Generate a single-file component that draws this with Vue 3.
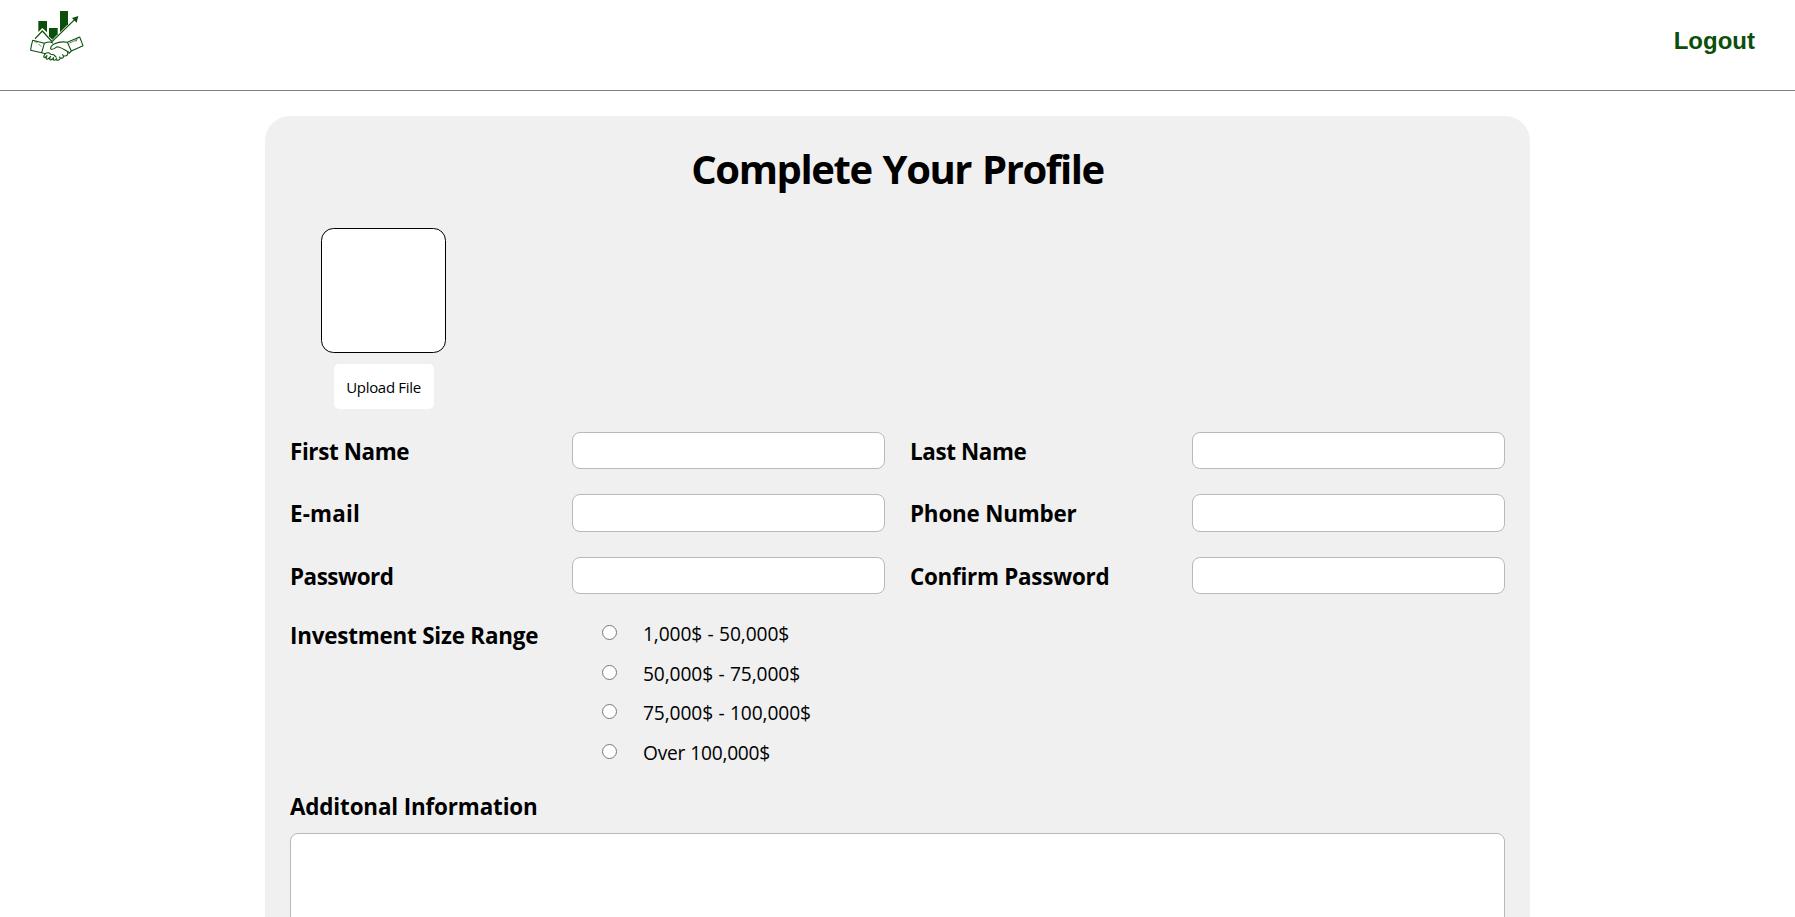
<script setup>
const fields = [
  { id: 'first', label: 'First Name', type: 'text' },
  { id: 'last', label: 'Last Name', type: 'text' },
  { id: 'email', label: 'E-mail', type: 'email' },
  { id: 'phone', label: 'Phone Number', type: 'tel' },
  { id: 'password', label: 'Password', type: 'password' },
  { id: 'confirm', label: 'Confirm Password', type: 'password' },
]
const ranges = ['1,000$ - 50,000$', '50,000$ - 75,000$', '75,000$ - 100,000$', 'Over 100,000$']
</script>

<template>
  <div class="page">
    <header class="bar">
      <svg class="logo" viewBox="39 30 174 156" fill="none" stroke="#0b4f0b" stroke-width="3.2" stroke-linecap="round" stroke-linejoin="round">
        <g fill="#0b4f0b" stroke="none">
          <path d="M70 63H96V97L82 84L70 96Z" />
          <path d="M102 84H128V103L112 119L102 109Z" />
          <path d="M135 33H159V73L135 97Z" />
          <path d="M190 48L171 54L185 68Z" />
        </g>
        <path d="M61 115L82 93L111 125L182 56" stroke-width="3.8" />
        <path d="M53 121L88 130L80 158L47 151L49 137ZM88 130C97 126 106 124 113 129M80 158L91 161" />
        <path d="M157 127L194 111L204 137L169 153ZM157 127C143 124 130 126 119 131C111 135 106 142 107 147C115 151 120 144 126 140C140 142 151 150 163 158M169 153L162 160" />
        <path d="M91 161L86 169C87 174 92 173 96 167M96 167L93 175C98 181 103 174 107 169M105 174C102 183 109 182 116 173M115 176C114 183 121 182 125 175M123 179C132 183 138 177 134 171M134 173C144 177 149 171 143 164M145 167C155 170 160 164 158 157M91 161C97 156 104 158 107 163L116 164L123 171" />
        <path d="M59 125L66 127M164 129L184 120M72 133L78 139M183 124L187 116" stroke-width="2" />
      </svg>
      <a class="logout">Logout</a>
    </header>

    <main class="card">
      <h1 class="title">Complete Your Profile</h1>

      <div class="upload">
        <div class="preview"></div>
        <button class="upload-btn" type="button">Upload File</button>
      </div>

      <form class="form">
        <div class="fields">
          <template v-for="f in fields" :key="f.id">
            <label class="label" :class="f.id" :for="f.id">{{ f.label }}</label>
            <input :id="f.id" class="input" :type="f.type" />
          </template>
        </div>

        <div class="ranges">
          <span class="label invest">Investment Size Range</span>
          <div class="options">
            <label v-for="(r, i) in ranges" :key="r" class="option">
              <input class="radio" type="radio" name="range" :value="i" />
              <span>{{ r }}</span>
            </label>
          </div>
        </div>

        <label class="label info" for="info">Additonal Information</label>
        <textarea id="info" class="textarea"></textarea>
      </form>
    </main>
  </div>
</template>

<style>
body {
  margin: 0;
  background: #fff;
}
</style>

<style scoped>
.page {
  height: 917px;
  overflow: hidden;
  font-family: "Segoe UI", "Open Sans", sans-serif;
  color: #000;
}
.bar {
  box-sizing: border-box;
  height: 91px;
  border-bottom: 1px solid #808080;
  display: flex;
  justify-content: space-between;
  align-items: flex-start;
  padding: 10px 40px 0 28px;
}
.logo {
  width: 58px;
  height: 52px;
}
.logout {
  margin-top: 17px;
  font: bold 24px/28px "Liberation Sans", Arial, sans-serif;
  color: #0b4f0b;
}
.card {
  box-sizing: border-box;
  width: 1265px;
  height: 1000px;
  margin: 25px auto 0;
  padding: 27px 25px 0;
  background: #f0f0f0;
  border-radius: 25px;
}
.title {
  margin: 0;
  text-align: center;
  font-size: 40px;
  line-height: 52px;
  font-weight: 700;
  letter-spacing: -1.42px;
  word-spacing: 2px;
}
.upload {
  width: 125px;
  margin: 33px 0 0 31px;
  display: flex;
  flex-direction: column;
  align-items: center;
}
.preview {
  box-sizing: border-box;
  width: 125px;
  height: 125px;
  border: 1px solid #000;
  border-radius: 12.5px;
  background: #fff;
}
.upload-btn {
  width: 100px;
  height: 45px;
  margin-top: 11px;
  padding: 0;
  border: 0;
  border-radius: 5px;
  background: #fff;
  color: #000;
  font-family: inherit;
  font-size: 15px;
  letter-spacing: -0.32px;
  white-space: nowrap;
}
.form {
  margin-top: 23px;
}
.fields {
  display: grid;
  grid-template-columns: 257px 313px 257px 313px;
  column-gap: 25px;
  row-gap: 25.2px;
  grid-auto-rows: 37.2px;
}
.label {
  font-size: 22.4px;
  line-height: 30px;
  font-weight: 700;
  letter-spacing: -0.2px;
  white-space: nowrap;
}
.fields .label {
  padding-top: 5px;
}
.fields .first,
.fields .last {
  letter-spacing: -0.38px;
}
.fields .email {
  letter-spacing: 0.18px;
}
.fields .password {
  letter-spacing: -0.46px;
}
.fields .confirm {
  letter-spacing: -0.26px;
}
.input,
.textarea {
  box-sizing: border-box;
  display: block;
  width: 100%;
  height: 37.2px;
  margin: 0;
  border: 1px solid #b9b9b9;
  border-radius: 8px;
  background: #fff;
  outline: 0;
}
.ranges {
  display: flex;
  margin-top: 26px;
}
.invest {
  width: 312px;
  margin-top: 1px;
}
.options {
  display: flex;
  flex-direction: column;
}
.option {
  display: flex;
  align-items: flex-start;
  height: 39.7px;
  font-size: 19.2px;
  line-height: 28px;
  letter-spacing: -0.1px;
  word-spacing: 0.5px;
}
.option:last-child {
  letter-spacing: -0.26px;
}
.radio {
  width: 15px;
  height: 15px;
  margin: 5px 26px 0 0;
}
.info {
  display: block;
  margin-top: 13.2px;
  letter-spacing: -0.14px;
}
.textarea {
  height: 150px;
  margin-top: 11px;
  resize: none;
}
</style>
